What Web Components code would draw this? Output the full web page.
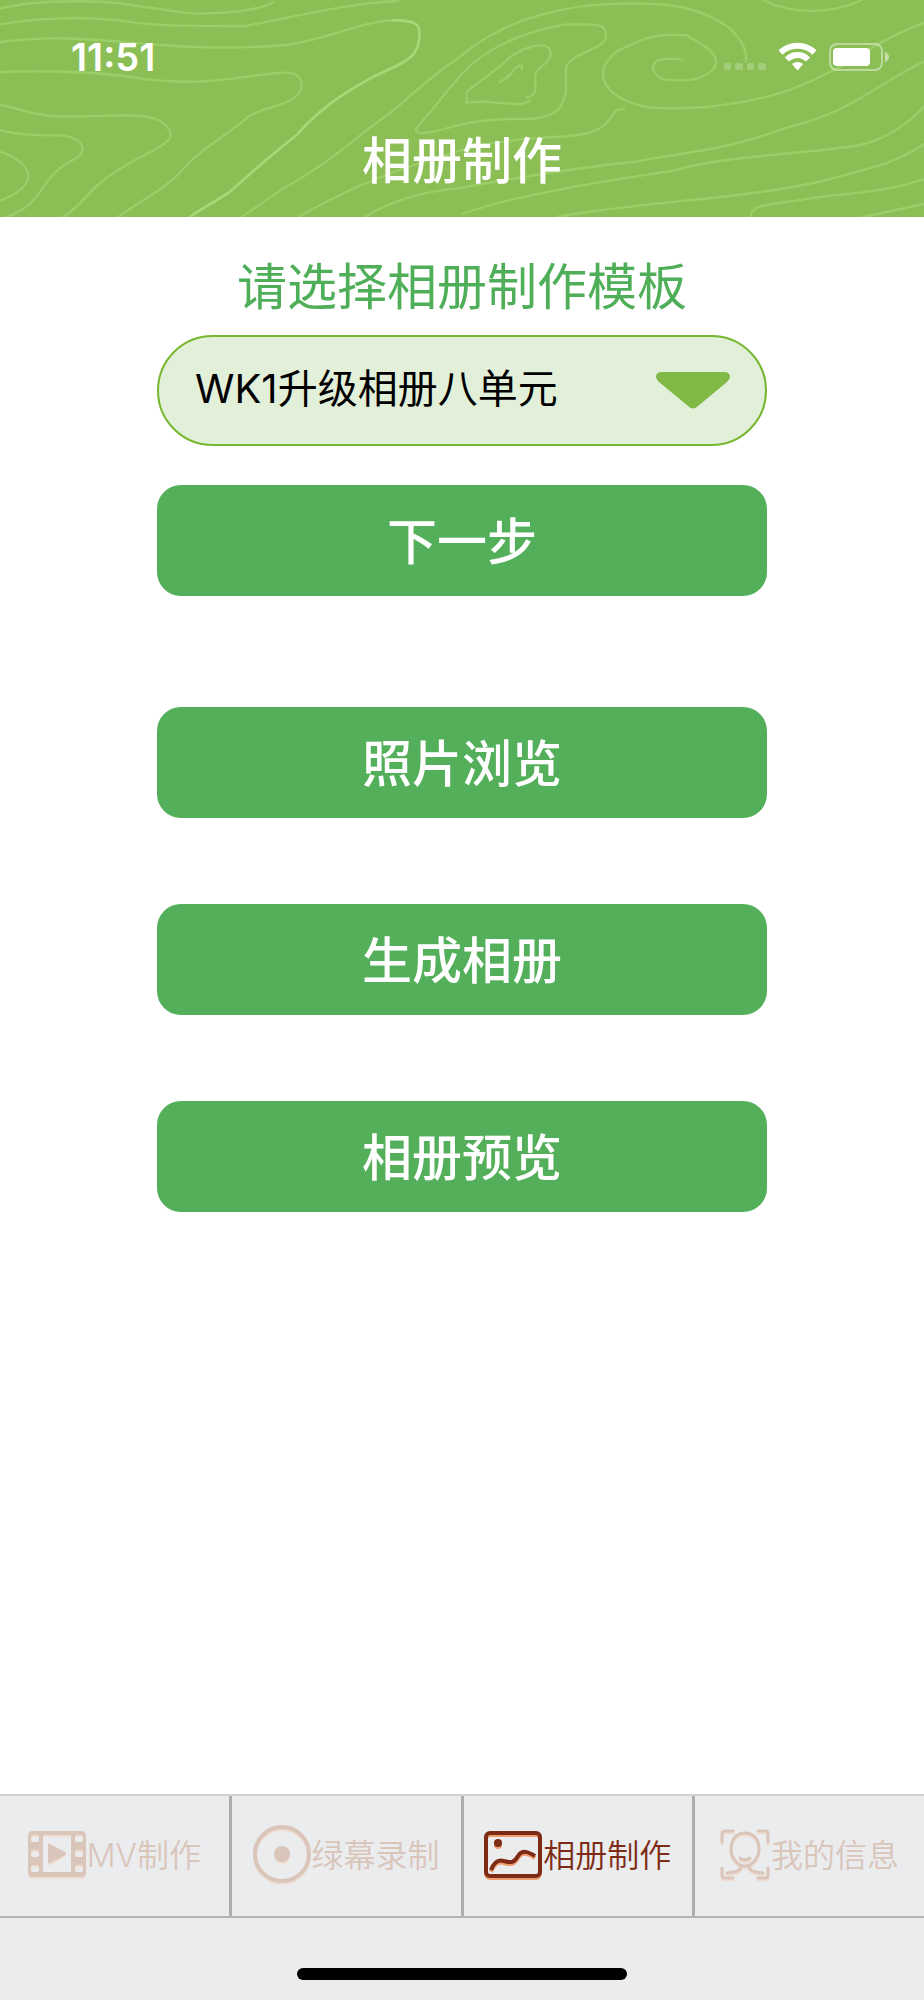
<!DOCTYPE html>
<html lang="zh-CN">
<head>
<meta charset="utf-8">
<meta name="viewport" content="width=device-width, initial-scale=1">
<title>相册制作</title>
<style>
body { margin: 0; font-family: Inter, "Noto Sans CJK SC", sans-serif; background: #fff; }
</style>
</head>
<body>
<album-app></album-app>
<script>
const define = (name, html, setup) => {
  const template = document.createElement('template');
  template.innerHTML = html;
  customElements.define(name, class extends HTMLElement {
    connectedCallback() {
      if (this.shadowRoot) return;
      this.attachShadow({ mode: 'open' }).append(template.content.cloneNode(true));
      if (setup) setup(this, this.shadowRoot);
    }
  });
};

const icons = {
  film: [58, `<path fill-rule="evenodd" d="M5 6h48q5 0 5 5v36q0 5-5 5H5q-5 0-5-5V11q0-5 5-5zM15 10v37h28V10zM5 10q-2 0-2 2v3q0 2 2 2h4q2 0 2-2v-3q0-2-2-2zM5 25q-2 0-2 2v3q0 2 2 2h4q2 0 2-2v-3q0-2-2-2zM5 40q-2 0-2 2v3q0 2 2 2h4q2 0 2-2v-3q0-2-2-2zM49 10q-2 0-2 2v3q0 2 2 2h4q2 0 2-2v-3q0-2-2-2zM49 25q-2 0-2 2v3q0 2 2 2h4q2 0 2-2v-3q0-2-2-2zM49 40q-2 0-2 2v3q0 2 2 2h4q2 0 2-2v-3q0-2-2-2z"/><path d="M20 20q0-2 2-1l15 8q2 1.500 0 3l-15 8q-2 1-2-1z"/>`],
  record: [58, `<circle cx="29" cy="29" r="27" fill="none" stroke="currentColor" stroke-width="4"/><circle cx="29" cy="29" r="8"/>`],
  picture: [58, `<g fill="none" stroke="currentColor" stroke-width="4" stroke-linejoin="round"><rect x="2" y="8" width="54" height="43" rx="4"/><path d="M7 45C10 37 14 34 20 36C27 38 30 38 34 31C38 25 43 26 51 31"/></g><circle cx="14" cy="18" r="4"/>`],
  face: [50, `<g fill="none" stroke="currentColor" stroke-width="3" stroke-linecap="round"><path d="M2 17V9q0-3 3-3h8M38 6h7q3 0 3 3v8M2 43v7q0 3 3 3h8M38 53h7q3 0 3-3v-7"/><path d="M25 8C16 8 11 15 11 24S18 41 25 41S39 33 39 24S34 8 25 8zM20 33q5 4 10 0M21 41C21 45 18 47 7 48M29 41C29 45 32 47 43 48"/></g>`]
};

define('contour-lines', `
<style>
:host { display: block; position: absolute; inset: 0; }
svg { display: block; width: 100%; height: 100%; }
</style>
<svg viewBox="0 0 2772 651" preserveAspectRatio="xMidYMid slice" fill="none" stroke="#9bce68" stroke-width="7" stroke-linecap="round" aria-hidden="true">
<path d="M0 26C100 0 270 0 360 10C450 22 520 36 580 40C680 43 780 30 822 5"/>
<path d="M0 73C150 48 280 50 400 67C490 77 510 78 735 78C930 40 1060 8 1195 3"/>
<path d="M0 126C160 105 280 118 440 132C620 146 720 146 860 135C980 120 1090 62 1180 61"/>
<path d="M1180 61C1240 60 1262 70 1258 105C1260 180 1200 190 1115 233C1020 285 950 335 890 405C820 460 740 530 690 575C640 610 600 627 570 651" stroke="#a7d877" stroke-width="8"/>
<path d="M0 216C200 208 350 223 440 238C650 262 740 220 860 218C905 218 910 250 900 275C870 320 800 315 745 350C690 400 620 435 560 495C500 570 420 600 355 651"/>
<path d="M0 315C60 325 90 345 165 349C260 352 370 342 430 348C500 358 520 398 508 418C480 450 420 465 340 520C260 570 260 605 190 651"/>
<path d="M0 391C60 405 100 406 180 406C240 410 260 440 240 466C210 488 180 495 150 533C110 590 100 620 20 651"/>
<path d="M0 455C60 475 90 505 85 535C75 570 35 588 0 602"/>
<path d="M1386 166C1300 225 1250 270 1170 340C1080 400 990 490 850 565C800 600 770 620 725 651"/>
<path d="M1386 222C1340 270 1300 330 1252 380Q1238 400 1270 399C1320 395 1340 382 1386 373C1490 350 1550 360 1610 355C1690 340 1685 310 1698 280V210C1700 160 1800 155 1817 115C1822 70 1800 72 1700 73C1570 92 1450 150 1386 222"/>
<path d="M1386 165C1520 55 1700 10 1880 11C2010 8 2100 20 2190 85C2230 125 2243 155 2237 185"/>
<path d="M1400 310V275C1430 250 1490 210 1520 180C1560 145 1655 110 1652 165C1645 195 1610 200 1606 225V270Q1600 290 1580 292M1400 308L1440 305C1500 306 1570 322 1590 302M1500 247C1550 220 1530 205 1560 197Q1570 195 1565 207"/>
<path d="M2050 183C2050 174 1990 176 1985 178C1950 185 1950 215 1985 236C2010 243 2060 241 2080 239C2140 220 2150 200 2148 180C2140 145 2090 125 2060 106C1960 95 1910 125 1850 155C1760 225 1830 305 1950 322C2120 335 2330 300 2460 230C2580 180 2600 135 2772 68"/>
<path d="M1873 328Q1845 325 1840 345C1800 390 1790 408 1640 412C1510 418 1400 442 1305 475C1140 525 1020 580 895 651"/>
<path d="M2772 185C2640 245 2560 335 2370 380C2160 455 2090 450 1900 486C1700 505 1460 550 1386 563C1260 575 1160 610 1095 651"/>
<path d="M2772 320C2710 385 2650 420 2580 435C2400 465 2180 465 2020 512C1780 548 1530 590 1386 642"/>
<path d="M2772 432C2670 500 2580 510 2480 540C2230 600 1950 600 1670 651"/>
<path d="M2772 537C2650 580 2520 580 2430 595C2330 613 2250 610 2252 648M2772 612C2700 628 2640 640 2590 651M2290 0C2370 42 2490 46 2585 0"/>
</svg>`);

define('status-bar', `
<style>
:host { display: flex; position: relative; align-items: center; justify-content: space-between; height: 114px; padding: 0 35px 0 71px; box-sizing: border-box; }
time { font-size: 38px; line-height: 44px; font-weight: 600; }
svg { display: block; width: 166px; height: 30px; }
</style>
<time>11:51</time>
<svg viewBox="0 0 166 30" role="img" aria-label="Wi-Fi、电池">
<g fill="#fff" fill-opacity=".22"><rect x="1" y="21" width="7" height="7" rx="2"/><rect x="12" y="21" width="8" height="7" rx="2"/><rect x="24" y="21" width="7" height="7" rx="2"/><rect x="35" y="21" width="8" height="7" rx="2"/></g>
<g fill="none" stroke="#fff"><path stroke-width="6" d="M57.500 10.500C67 1.500 82 1.500 91.500 10.500"/><path stroke-width="6" d="M64 17.500C70 11.500 79 11.500 85 17.500"/></g>
<path d="M69 22Q74.500 18 80 22L75.500 27.500q-1 1-2 0z" fill="#fff"/>
<rect x="107" y="2" width="52" height="26" rx="7" fill="none" stroke="#fff" stroke-opacity=".42" stroke-width="2"/>
<rect x="110" y="6" width="37" height="18" rx="4" fill="#fff"/>
<path d="M162 10q4 2 4 5t-4 5z" fill="#fff" fill-opacity=".5"/>
</svg>`);

define('page-header', `
<style>
:host { display: block; position: relative; background: #8bbf55; color: #fff; overflow: hidden; padding-bottom: 19px; }
h1 { position: relative; margin: 0; padding: 15px 0 5px; text-align: center; font-size: 50px; line-height: 64px; font-weight: 500; }
</style>
<contour-lines></contour-lines>
<status-bar></status-bar>
<h1><slot></slot></h1>`);

define('template-picker', `
<style>
:host { display: block; }
label { display: block; text-align: center; font-size: 50px; line-height: 72px; color: #4fae58; white-space: nowrap; margin-bottom: 12px; }
.box { display: grid; align-items: center; }
.box > * { grid-area: 1 / 1; }
select { appearance: none; width: 100%; height: 111px; margin: 0; padding: 0 120px 4px 36px; border: 2px solid #77b72f; border-radius: 56px; background: #e2f0d9; color: #000; font: inherit; font-size: 40px; }
svg { justify-self: end; width: 74px; height: 37px; margin-right: 37px; pointer-events: none; }
</style>
<label for="template">请选择相册制作模板</label>
<div class="box">
<select id="template"><option>WK1升级相册八单元</option></select>
<svg viewBox="0 0 74 37" aria-hidden="true"><path d="M6 0H68Q74 0 74 5Q74 7 71 10L42 34Q37 39 32 34L3 10Q0 7 0 5Q0 0 6 0Z" fill="#80b945"/></svg>
</div>`);

define('action-button', `
<style>
:host { display: block; }
button { display: block; width: 100%; height: 111px; margin: 0; padding: 2px 0 0; border: 0; border-radius: 24px; background: #53af5a; color: #fff; font: inherit; font-size: 50px; line-height: 64px; font-weight: 500; }
</style>
<button type="button"><slot></slot></button>`);

define('tab-item', `
<style>
:host { display: block; background: #eaecee; color: #dac5bb; --shade: #f0ddd1; }
:host([current]) { color: #7d2b14; --shade: #ee9d70; }
a { display: flex; align-items: center; justify-content: center; gap: 1px; height: 120px; color: inherit; text-decoration: none; font-size: 32px; line-height: 48px; font-weight: 350; white-space: nowrap; }
svg { display: block; height: 58px; margin-bottom: 5px; fill: currentColor; flex: none; overflow: visible; filter: drop-shadow(0 2px 0 var(--shade)); }
</style>
<a href="#"><svg aria-hidden="true"></svg><span><slot></slot></span></a>`, (host, root) => {
  const [width, art] = icons[host.getAttribute('icon')];
  const svg = root.querySelector('svg');
  svg.setAttribute('viewBox', `0 0 ${width} 58`);
  svg.setAttribute('width', width);
  svg.innerHTML = art;
  if (host.hasAttribute('current')) root.querySelector('a').setAttribute('aria-current', 'page');
});

define('tab-bar', `
<style>
:host { display: block; background: #eaecee; }
nav { display: grid; grid-template-columns: repeat(4, 1fr); gap: 3px; background: #adaeb0; border-top: 2px solid #cfd0d0; border-bottom: 2px solid #b3b4b6; }
.home { width: 330px; height: 12px; margin: 50px auto 0; border-radius: 6px; background: #000; }
footer { padding-bottom: 20px; display: flow-root; }
</style>
<nav><slot></slot></nav>
<footer><div class="home"></div></footer>`);

define('album-app', `
<style>
:host { display: flex; flex-direction: column; min-height: 100vh; }
main { flex: 1; width: 66%; margin: 0 auto; padding: 34px 0 60px; box-sizing: border-box; }
.next { margin: 39px 0 111px; }
.actions { display: grid; gap: 86px; }
</style>
<page-header>相册制作</page-header>
<main>
<template-picker></template-picker>
<action-button class="next">下一步</action-button>
<div class="actions">
<action-button>照片浏览</action-button>
<action-button>生成相册</action-button>
<action-button>相册预览</action-button>
</div>
</main>
<tab-bar>
<tab-item icon="film">MV制作</tab-item>
<tab-item icon="record">绿幕录制</tab-item>
<tab-item icon="picture" current>相册制作</tab-item>
<tab-item icon="face">我的信息</tab-item>
</tab-bar>`);
</script>
</body>
</html>
